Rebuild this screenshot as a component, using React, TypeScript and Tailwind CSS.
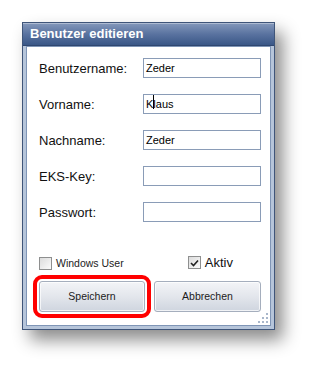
const font = { fontFamily: '"Liberation Sans", Arial, sans-serif' };

function Field({ label, value, caret }: { label: string; value?: string; caret?: boolean }) {
  return (
    <div className="flex h-[20px] items-center justify-between">
      <span className="pl-px text-[13px] leading-none text-[#111]">{label}</span>
      <div className="flex h-[20px] w-[118px] items-center border border-[#8a9cb7] bg-white pl-[2px] text-[11px] text-black">
        {caret ? (
          <>
            <span className="relative">
              K<span className="absolute right-[-1px] top-[-1px] h-[14px] w-px bg-black" />
            </span>
            laus
          </>
        ) : (
          value
        )}
      </div>
    </div>
  );
}

function Check({ checked }: { checked?: boolean }) {
  return (
    <span className="flex h-[13px] w-[13px] items-center justify-center border border-[#8e8f8f] bg-gradient-to-br from-[#dcdcdc] to-[#fbfbfb]">
      {checked && (
        <svg width="9" height="8" viewBox="0 0 9 8">
          <path d="M1 4 L3.5 6.5 L8 1.5" fill="none" stroke="#222" strokeWidth="1.6" />
        </svg>
      )}
    </span>
  );
}

function Btn({ label, mark }: { label: string; mark?: boolean }) {
  return (
    <button
      className={
        "h-[31px] rounded-[3px] border border-[#a5aebd] bg-gradient-to-b from-[#f3f4f7] via-[#e3e6ec] to-[#cfd5df] text-[10.5px] text-[#1b1b1b] shadow-[inset_0_0_0_1px_rgba(255,255,255,0.7)] " +
        (mark ? "w-[106px] outline-4 outline-offset-2 outline-[#ff0000]" : "w-[107px]")
      }
    >
      {label}
    </button>
  );
}

export default function App() {
  return (
    <div className="h-[373px] w-[318px] bg-white pl-[22px] pt-[22px]" style={font}>
      <div className="w-[253px] border border-[#3f5579] bg-[#b6c5da] shadow-[8px_10px_16px_rgba(0,0,0,0.45)]">
        <div className="flex h-[23px] items-center border-b border-[#2f4770] bg-gradient-to-b from-[#8599bb] via-[#5a73a0] to-[#3a5787] pl-[7px] text-[13px] font-bold text-white shadow-[inset_0_1px_0_rgba(255,255,255,0.35)]">
          Benutzer editieren
        </div>
        <div className="px-[3px] pb-[3px]">
          <div className="relative h-[280px] border border-[#7f95b6] bg-white pl-[11px] pr-[9px] pt-[11px]">
            <div className="flex flex-col gap-[16px]">
              <Field label="Benutzername:" value="Zeder" />
              <Field label="Vorname:" caret />
              <Field label="Nachname:" value="Zeder" />
              <Field label="EKS-Key:" value="" />
              <Field label="Passwort:" value="" />
            </div>
            <div className="mt-[31px] flex h-[18px] items-start">
              <div className="ml-px mt-[3px] flex items-center gap-[4px] text-[10.5px] text-[#222]">
                <Check />
                <span>Windows User</span>
              </div>
              <div className="ml-auto mr-[28px] flex items-center gap-[4px] text-[13px] text-[#111]">
                <Check checked />
                <span>Aktiv</span>
              </div>
            </div>
            <div className="ml-px mt-[10px] flex gap-[9px]">
              <Btn label="Speichern" mark />
              <Btn label="Abbrechen" />
            </div>
            <svg className="absolute bottom-[1px] right-[1px]" width="11" height="11" viewBox="0 0 11 11">
              {[
                [8, 0],
                [4, 4],
                [8, 4],
                [0, 8],
                [4, 8],
                [8, 8],
              ].map(([x, y], i) => (
                <g key={i}>
                  <rect x={x + 1} y={y + 1} width="2" height="2" fill="#fff" />
                  <rect x={x} y={y} width="2" height="2" fill="#a9b7cb" />
                </g>
              ))}
            </svg>
          </div>
        </div>
      </div>
    </div>
  );
}
